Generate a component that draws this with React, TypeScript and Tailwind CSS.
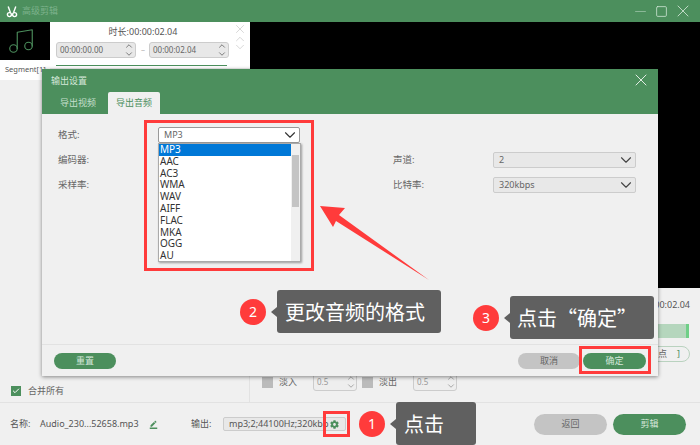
import { Check, ChevronDown, ChevronUp, Minus, Music, Square, X } from 'lucide-react';
import { FaCog } from 'react-icons/fa';
import { MdBorderColor } from 'react-icons/md';

const FONT = "font-['Noto_Sans','Noto_Sans_CJK_SC',sans-serif]";
const FORMATS = ['MP3', 'AAC', 'AC3', 'WMA', 'WAV', 'AIFF', 'FLAC', 'MKA', 'OGG', 'AU'];

const Arrows = () => (
  <div className="flex flex-col">
    <ChevronUp size={10} className="-my-px" />
    <ChevronDown size={10} className="-my-px" />
  </div>
);

const Spinner = ({ value }: { value: string }) => (
  <div className="w-20 h-4 rounded-[3px] bg-[#e8e8e8] border border-[#cccccc] flex items-center justify-between pl-[3px] pr-[1px] text-[8px] text-[#666666]">
    <span>{value}</span>
    <Arrows />
  </div>
);

const Select = ({ value }: { value: string }) => (
  <div className="w-[143px] h-4 rounded-[2px] bg-[#e8e8e8] border border-[#cccccc] flex items-center justify-between pl-[5px] text-[9px] text-[#666666]">
    <span>{value}</span>
    <ChevronDown size={18} strokeWidth={1.5} className="text-[#444444]" />
  </div>
);

const Pill = ({ label, green, w }: { label: string; green?: boolean; w: string }) => (
  <div className={`${w} h-4 rounded-full flex items-center justify-center text-[9px] ${green ? 'bg-[#4c8f5d] text-[#d5e8da]' : 'bg-[#c4c4c4] text-[#666666]'}`}>
    {label}
  </div>
);

const Fade = ({ label }: { label: string }) => (
  <div className="flex items-center">
    <div className="w-[11px] h-[11px] bg-[#bbbbbb]" />
    <span className="ml-[6px] w-[34px] text-[9px] text-[#666666]">{label}</span>
    <div className="w-11 h-[18px] rounded-[3px] border border-[#cccccc] bg-[#eeeeee] flex items-center justify-between pl-[3px] text-[8px] text-[#999999]">
      <span>0.5</span>
      <Arrows />
    </div>
  </div>
);

const Callout = ({ num, text, className, boxClass }: { num: string; text: string; className: string; boxClass: string }) => (
  <div className={`absolute flex items-center ${className}`}>
    <div className="w-[26px] h-[26px] rounded-full bg-[#ff3b3b] text-white text-[14px] flex items-center justify-center">{num}</div>
    <div className="ml-[5px] w-0 h-0 border-y-[5px] border-y-transparent border-r-[6px] border-r-[#606060]" />
    <div className={`h-[43px] rounded-[3px] bg-[#606060] text-white text-[20px] font-['Noto_Sans_CJK_SC',sans-serif] whitespace-nowrap flex items-center ${boxClass}`}>{text}</div>
  </div>
);

export default function App() {
  return (
    <div className={`relative w-[700px] h-[445px] overflow-hidden bg-[#f0f0f0] flex flex-col ${FONT}`}>
      {/* Title bar */}
      <div className="h-[22px] shrink-0 bg-[#4c8f5d] flex items-center pl-[6px] pr-[6px]">
        <svg width="12" height="13" viewBox="0 0 12 13" fill="none" stroke="white" strokeWidth="1.4">
          <circle cx="3.4" cy="9.6" r="2" />
          <circle cx="8.6" cy="9.6" r="2" />
          <path d="M4.5 7.8L2.2 1.5M7.5 7.8L9.8 1.5" />
        </svg>
        <span className="ml-[4px] text-[9px] text-[#7db28c]">高级剪辑</span>
        <div className="ml-auto flex items-center text-[#d5e8da]">
          <div className="w-[21px] flex justify-center"><Minus size={17} strokeWidth={1} className="text-[#a5c9af]" /></div>
          <div className="w-[21px] flex justify-center"><Square size={13} strokeWidth={1.4} /></div>
          <div className="w-[22px] flex justify-center"><X size={20} strokeWidth={1} /></div>
        </div>
      </div>

      {/* Preview area */}
      <div className="h-[266px] shrink-0 flex items-start bg-black">
        <div className="w-[250px] h-full bg-[#f0f0f0] flex items-start">
          <div className="w-[50px] flex flex-col">
            <div className="h-[38px] bg-black pr-2 flex items-center justify-center">
              <Music size={30} strokeWidth={0.9} className="text-[#4c8f5d]" />
            </div>
            <div className="h-5 bg-white pl-[5px] flex items-center text-[7.5px] text-[#555555] whitespace-nowrap">Segment[1]</div>
          </div>
          <div className="w-[200px] h-[46px] bg-white relative flex flex-col">
            <div className="h-[19px] pr-[14px] flex items-center justify-center text-[9px] text-[#555555]">时长:00:00:02.04</div>
            <div className="flex items-center gap-[5px] ml-[6px] mt-[1px]">
              <Spinner value="00:00:00.00" />
              <span className="w-[3px] text-[8px] text-[#bbbbbb]">–</span>
              <Spinner value="00:00:02.04" />
            </div>
            <div className="mt-[7px] ml-[6px] w-[171px] h-[1px] bg-[#4c8f5d]" />
            <div className="absolute right-[3px] top-0 flex flex-col items-center text-[#bbbbbb]">
              <X size={14} strokeWidth={1} />
              <ChevronUp size={14} strokeWidth={1} className="-mt-[4px]" />
              <ChevronDown size={14} strokeWidth={1} className="-mt-[6px]" />
            </div>
          </div>
        </div>
        <div className="flex-1" />
      </div>

      {/* Lower panels */}
      <div className="flex-1 flex">
        <div className="w-[250px] border-r border-[#e2e2e2] flex items-end pl-[11px] pb-[6px]">
          <div className="w-[10px] h-[10px] bg-[#4c8f5d] flex items-center justify-center">
            <Check size={8} strokeWidth={3} className="text-white" />
          </div>
          <span className="ml-[7px] text-[9px] leading-[11px] text-[#666666]">合并所有</span>
        </div>
        <div className="flex-1 flex flex-col items-end pr-[10px] pt-[11px]">
          <span className="text-[9px] leading-3 text-[#555555]">00:00:02.04</span>
          <div className="mt-[13px] mr-px w-[40px] h-[14px] bg-[#b5d6bd] border-r-[3px] border-[#6fcf87]" />
          <div className="mt-[8px] w-[60px] h-4 rounded-full border border-[#b9d2bf] flex items-center justify-end pr-[9px] text-[9px] text-[#4c8f5d]">
            <span className="text-[#666666] mr-[10px]">点</span>]
          </div>
          <div className="self-start mt-[11px] ml-[12px] flex gap-[5px]">
            <Fade label="淡入" />
            <Fade label="淡出" />
          </div>
        </div>
      </div>

      {/* Bottom bar */}
      <div className="h-[43px] shrink-0 border-t border-[#e2e2e2] flex items-center pl-[10px] pr-[14px] text-[9px] text-[#555555]">
        <span className="w-[30px]">名称:</span>
        <span className="w-[109px] whitespace-nowrap">Audio_230...52658.mp3</span>
        <MdBorderColor size={9} className="text-[#4c8f5d]" />
        <span className="ml-[33px] w-[32px]">输出:</span>
        <div className="w-[123px] h-[14px] rounded-[2px] bg-[#e8e8e8] border border-[#cccccc] flex items-center pl-[5px] whitespace-nowrap">
          <span className="w-[101px]">mp3;2;44100Hz;320kbp</span>
          <FaCog size={9} className="shrink-0 text-[#4c8f5d]" />
        </div>
        <div className="ml-auto flex gap-[6px]">
          <div className="w-[73px] h-[21px] rounded-full bg-[#c4c4c4] text-[#666666] flex items-center justify-center">返回</div>
          <div className="w-[73px] h-[21px] rounded-full bg-[#4c8f5d] text-[#d5e8da] flex items-center justify-center">剪辑</div>
        </div>
      </div>

      {/* Export settings dialog */}
      <div className="absolute left-[42px] top-[69px] w-[616px] h-[307px] bg-[#f0f0f0] shadow-[0_1px_4px_rgba(0,0,0,0.45)] flex flex-col">
        <div className="h-[45px] shrink-0 bg-[#4c8f5d] relative">
          <span className="absolute left-[9px] top-[5px] text-[9px] text-[#d5e8da]">输出设置</span>
          <X size={20} strokeWidth={1} className="absolute right-[7px] top-[1px] text-white" />
          <div className="absolute bottom-0 left-0 flex h-[22px] text-[9px]">
            <div className="w-[66px] pl-[6px] flex items-center justify-center text-[#c4dfcc]">导出视频</div>
            <div className="w-[52px] rounded-t-[2px] bg-[#f0f0f0] flex items-center justify-center text-[#4c8f5d]">导出音频</div>
          </div>
        </div>

        <div className="flex-1 relative flex pl-4 pt-[38px] text-[9.5px] text-[#666666]">
          <div className="w-[335px] flex flex-col items-start">
            <div className="absolute left-4 top-[13px] leading-4">格式:</div>
            <div className="h-[25px] leading-4">编码器:</div>
            <div className="h-[25px] leading-4">采样率:</div>
          </div>
          <div className="flex flex-col gap-[9px]">
            <div className="flex items-center">
              <span className="w-[100px]">声道:</span>
              <Select value="2" />
            </div>
            <div className="flex items-center">
              <span className="w-[100px]">比特率:</span>
              <Select value="320kbps" />
            </div>
          </div>

          {/* Format dropdown */}
          <div className="absolute left-[116px] top-[13px] w-[142px] h-4 rounded-[2px] bg-white border border-[#999999] flex items-center justify-between pl-[5px] text-[9px]">
            <span>MP3</span>
            <ChevronDown size={18} strokeWidth={1.5} className="text-[#333333]" />
          </div>
          <div className="absolute left-[116px] top-[29px] w-[143px] h-[119px] bg-white border border-[#aaaaaa] shadow-[1px_1px_2px_rgba(0,0,0,0.35)] flex text-[10px] leading-[11.8px] text-[#333333]">
            <div className="flex-1">
              {FORMATS.map((f) => (
                <div key={f} className={`pl-[1px] h-[11.8px] ${f === 'MP3' ? 'bg-[#0078d7] text-white' : ''}`}>{f}</div>
              ))}
            </div>
            <div className="w-[9px] bg-[#f0f0f0] pt-[11px] px-[1px]">
              <div className="h-[52px] bg-[#c4c4c4]" />
            </div>
          </div>
        </div>

        <div className="h-[32px] shrink-0 border-t border-[#e2e2e2] flex items-center pl-3 pr-3">
          <Pill label="重置" green w="w-[62px]" />
          <div className="ml-auto flex gap-[3px]">
            <Pill label="取消" w="w-[62px]" />
            <Pill label="确定" green w="w-[63px]" />
          </div>
        </div>
      </div>

      {/* Tutorial annotations */}
      <div className="absolute left-[144px] top-[120px] w-[170px] h-[151px] border-[3px] border-[#ff3b3b]" />
      <div className="absolute left-[579px] top-[346px] w-[72px] h-[28px] border-[3px] border-[#ff3b3b]" />
      <div className="absolute left-[323px] top-[411px] w-[27px] h-[26px] border-[3px] border-[#ff3b3b]" />
      <svg className="absolute left-[320px] top-[206px]" width="110" height="75" viewBox="320 206 110 75">
        <polygon points="320,206 345,208 339,215 429,280 336,221 333,227" fill="#ff3b3b" />
      </svg>
      <Callout num="2" text="更改音频的格式" className="left-[240px] top-[290px]" boxClass="w-[164px] pl-[8px]" />
      <Callout num="3" text="点击“确定”" className="left-[473px] top-[296px]" boxClass="w-[144px] pl-[7px]" />
      <Callout num="1" text="点击" className="left-[359px] top-[402px]" boxClass="w-[80px] pl-[8px]" />
    </div>
  );
}
